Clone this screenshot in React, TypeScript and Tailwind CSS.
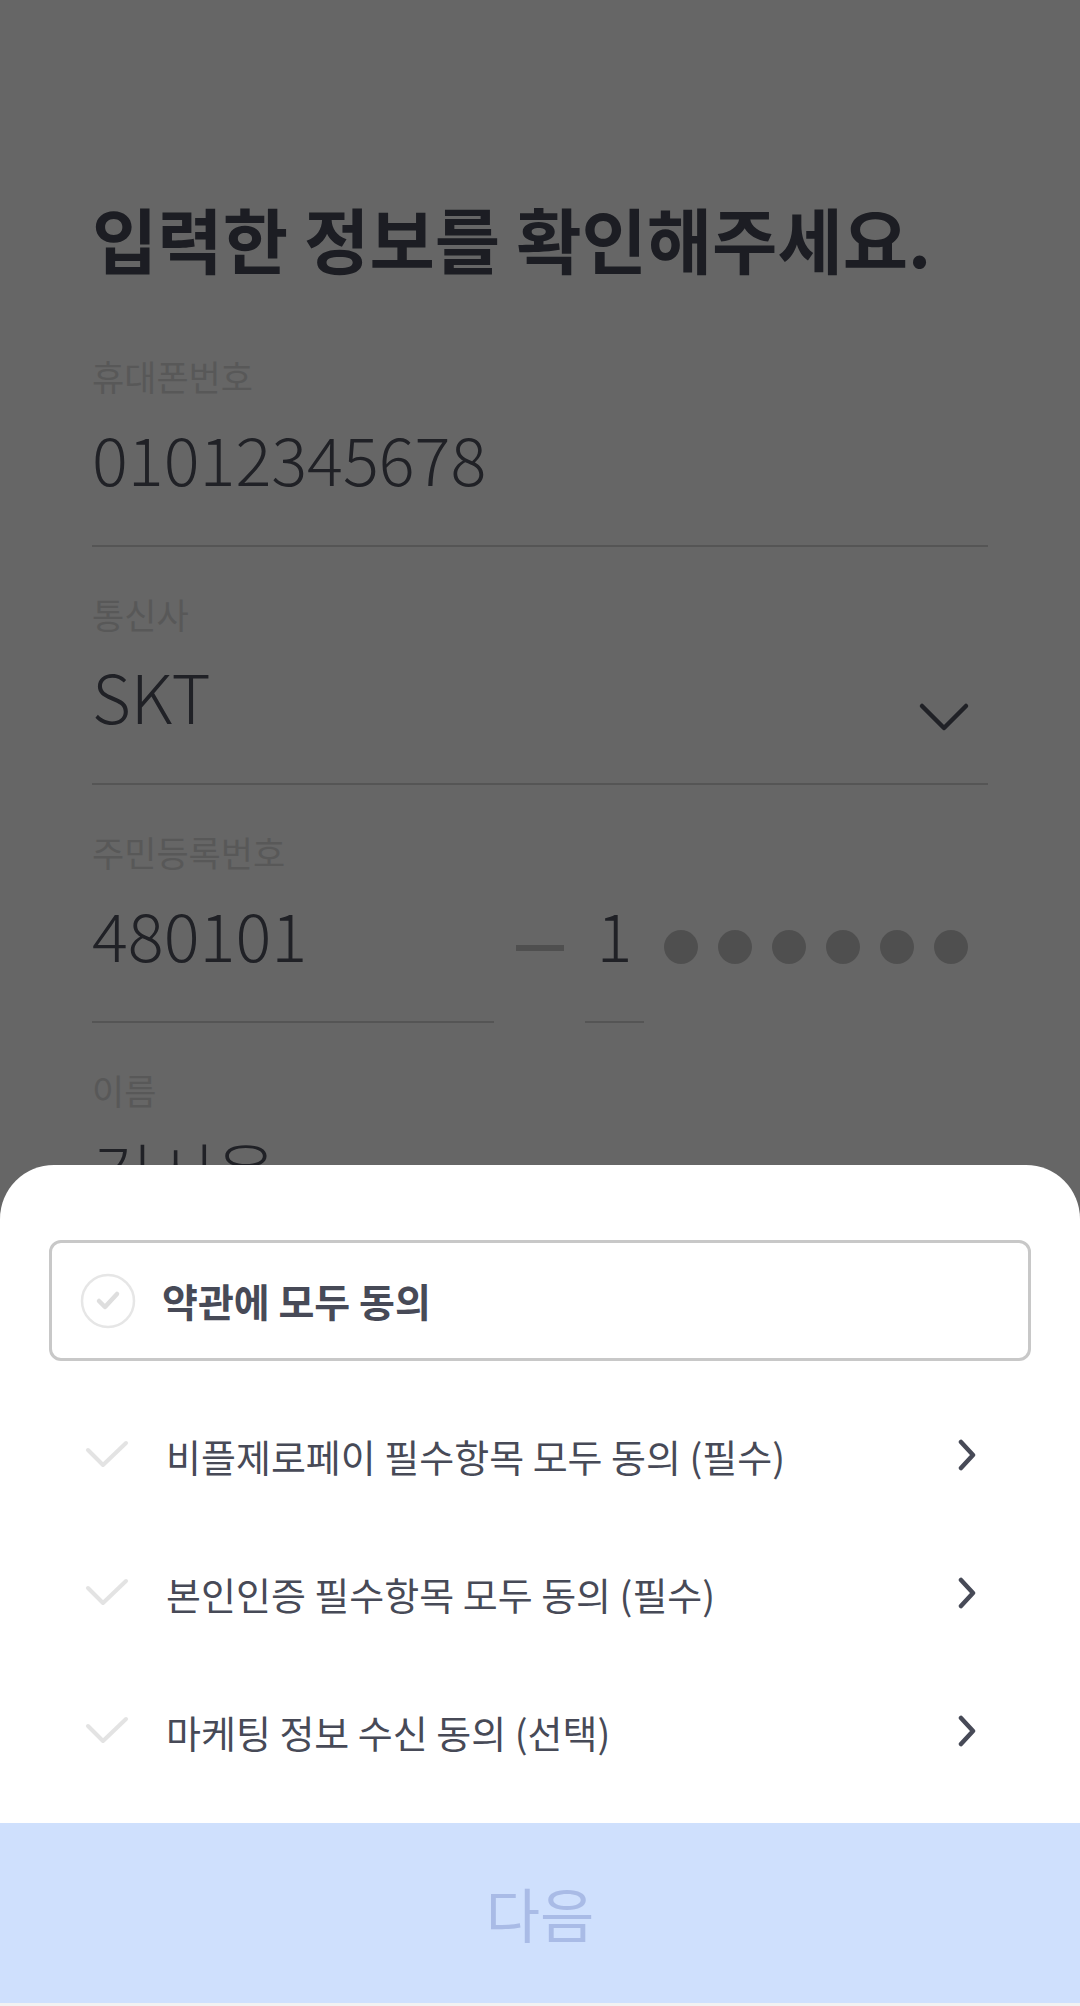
import { ReactNode } from "react";

const Field = ({ label, children }: { label: string; children: ReactNode }) => (
  <div className="pt-[47px]">
    <p className="h-[40px] text-[35px] leading-[40px] text-[#dcdcdc]">{label}</p>
    <div className="mt-[20px]">{children}</div>
  </div>
);

const Line = () => <div className="h-[2px] bg-[#d5d5d5]" />;

const CheckMark = () => (
  <svg width="46" height="30" viewBox="0 0 46 30" fill="none">
    <polyline
      points="4,10 19,25 42,3"
      stroke="#e3e3e3"
      strokeWidth="4"
      strokeLinecap="round"
      strokeLinejoin="round"
    />
  </svg>
);

const ChevronRight = () => (
  <svg width="20" height="32" viewBox="0 0 20 32" fill="none">
    <polyline
      points="4,3 16,16 4,29"
      stroke="#474a57"
      strokeWidth="4.5"
      strokeLinecap="round"
      strokeLinejoin="round"
    />
  </svg>
);

const terms = [
  "비플제로페이 필수항목 모두 동의 (필수)",
  "본인인증 필수항목 모두 동의 (필수)",
  "마케팅 정보 수신 동의 (선택)",
];

const App = () => {
  return (
    <div className="relative h-[2006px] w-[1080px] overflow-hidden bg-white font-['Noto_Sans_CJK_KR',sans-serif]">
      <div className="px-[92px] pt-[198px]">
        <h1 className="h-[79px] text-[71px] font-bold leading-[79px] text-[#474a57]">
          입력한 정보를 확인해주세요.
        </h1>

        <div className="pt-[32px]">
          <Field label="휴대폰번호">
            <p className="h-[82px] text-[67px] font-light leading-[82px] text-[#50535f]">
              01012345678
            </p>
            <div className="mt-[47px]">
              <Line />
            </div>
          </Field>
        </div>

        <Field label="통신사">
          <div className="flex h-[82px] items-start justify-between">
            <p className="text-[67px] font-light leading-[82px] text-[#50535f]">SKT</p>
            <div className="pt-[48px] pr-[18px]">
              <svg width="52" height="30" viewBox="0 0 52 30" fill="none">
                <polyline
                  points="4,4 26,26 48,4"
                  stroke="#50535f"
                  strokeWidth="4.5"
                  strokeLinecap="round"
                  strokeLinejoin="round"
                />
              </svg>
            </div>
          </div>
          <div className="mt-[47px]">
            <Line />
          </div>
        </Field>

        <Field label="주민등록번호">
          <div className="flex items-start">
            <div className="w-[402px]">
              <p className="h-[82px] text-[67px] font-light leading-[82px] text-[#50535f]">
                480101
              </p>
              <div className="mt-[47px]">
                <Line />
              </div>
            </div>
            <div className="flex h-[82px] w-[91px] items-start justify-center pt-[53px]">
              <div className="h-[6px] w-[48px] bg-[#c6c6c6]" />
            </div>
            <div className="w-[59px]">
              <p className="h-[82px] text-center text-[67px] font-light leading-[82px] text-[#50535f]">
                1
              </p>
              <div className="mt-[47px]">
                <Line />
              </div>
            </div>
            <div className="flex gap-[20px] pl-[20px] pt-[38px]">
              {[0, 1, 2, 3, 4, 5].map((i) => (
                <div key={i} className="h-[34px] w-[34px] rounded-full bg-[#c6c6c6]" />
              ))}
            </div>
          </div>
        </Field>

        <Field label="이름">
          <p className="h-[82px] text-[67px] font-light leading-[82px] text-[#50535f]">김서울</p>
        </Field>
      </div>

      {/* dim */}
      <div className="absolute inset-0 bg-black/60" />

      {/* bottom sheet */}
      <div className="absolute bottom-0 left-0 right-0 flex h-[841px] flex-col rounded-t-[54px] bg-white">
        <div className="px-[49px] pt-[75px]">
          <div className="flex h-[121px] items-center gap-[26px] rounded-[12px] border-[3px] border-[#c8c8c8] pl-[28px]">
            <svg width="56" height="56" viewBox="0 0 56 56" fill="none">
              <circle cx="28" cy="28" r="26" stroke="#e6e6e6" strokeWidth="2.5" />
              <polyline
                points="19,28 25,34 37,21"
                stroke="#dedede"
                strokeWidth="4.5"
                strokeLinecap="round"
                strokeLinejoin="round"
              />
            </svg>
            <span className="text-[39px] font-bold text-[#474a57]">약관에 모두 동의</span>
          </div>
        </div>

        <ul className="mt-[25px]">
          {terms.map((t) => (
            <li key={t} className="flex h-[138px] items-center pl-[84px] pr-[103px]">
              <CheckMark />
              <span className="ml-[36px] flex-1 text-[38px] text-[#474a57]">{t}</span>
              <ChevronRight />
            </li>
          ))}
        </ul>

        <div className="mt-[23px] flex h-[180px] items-center justify-center bg-[#cfe0fd]">
          <span className="text-[59px] text-[#a9bbe6]">다음</span>
        </div>
        <div className="h-[3px] bg-[#f2f2f2]" />
      </div>
    </div>
  );
};

export default App;
